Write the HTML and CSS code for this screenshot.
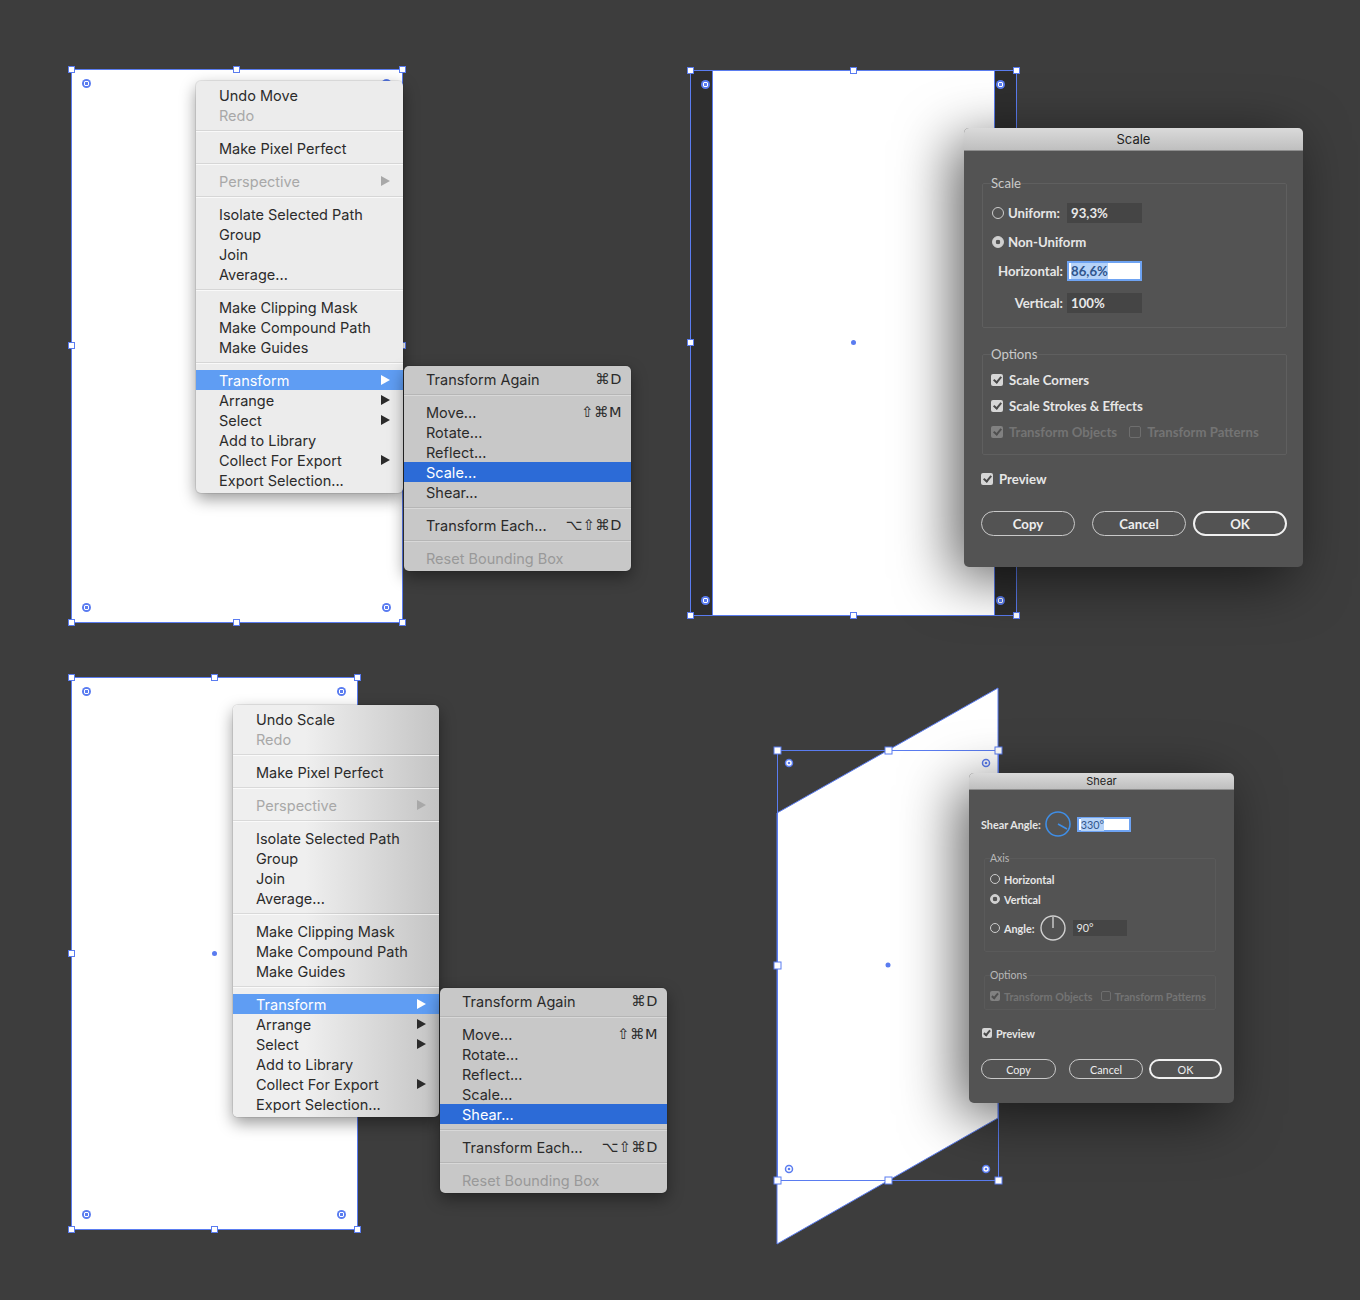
FILE: index.html
```html
<!DOCTYPE html>
<html lang="en">
<head>
  <meta charset="UTF-8">
  <title>Transform: Scale and Shear</title>
  <link rel="stylesheet" href="styles.css">
</head>
<body>
<div class="canvas">

  <!-- 1. context menu, Transform > Scale -->
  <div class="artboard board-one">
    <span class="handle h-tl"></span><span class="handle h-tm"></span><span class="handle h-tr"></span>
    <span class="handle h-ml"></span><span class="handle h-mr"></span>
    <span class="handle h-bl"></span><span class="handle h-bm"></span><span class="handle h-br"></span>
    <span class="widget w-tl"></span><span class="widget w-tr"></span>
    <span class="widget w-bl"></span><span class="widget w-br"></span>
  </div>

  <div class="menu menu-one">
    <div class="menu-item">Undo Move</div>
    <div class="menu-item is-disabled">Redo</div>
    <div class="menu-sep"></div>
    <div class="menu-item">Make Pixel Perfect</div>
    <div class="menu-sep"></div>
    <div class="menu-item is-disabled">Perspective<span class="arrow"></span></div>
    <div class="menu-sep"></div>
    <div class="menu-item">Isolate Selected Path</div>
    <div class="menu-item">Group</div>
    <div class="menu-item">Join</div>
    <div class="menu-item">Average...</div>
    <div class="menu-sep"></div>
    <div class="menu-item">Make Clipping Mask</div>
    <div class="menu-item">Make Compound Path</div>
    <div class="menu-item">Make Guides</div>
    <div class="menu-sep"></div>
    <div class="menu-item is-open">Transform<span class="arrow"></span></div>
    <div class="menu-item">Arrange<span class="arrow"></span></div>
    <div class="menu-item">Select<span class="arrow"></span></div>
    <div class="menu-item">Add to Library</div>
    <div class="menu-item">Collect For Export<span class="arrow"></span></div>
    <div class="menu-item">Export Selection...</div>
  </div>

  <div class="menu submenu sub-one">
    <div class="menu-item">Transform Again<span class="keys">⌘D</span></div>
    <div class="menu-sep"></div>
    <div class="menu-item">Move...<span class="keys">⇧⌘M</span></div>
    <div class="menu-item">Rotate...</div>
    <div class="menu-item">Reflect...</div>
    <div class="menu-item is-active">Scale...</div>
    <div class="menu-item">Shear...</div>
    <div class="menu-sep"></div>
    <div class="menu-item">Transform Each...<span class="keys">⌥⇧⌘D</span></div>
    <div class="menu-sep"></div>
    <div class="menu-item is-disabled">Reset Bounding Box</div>
  </div>

  <!-- 2. scale dialog -->
  <div class="selection board-two">
    <div class="scaled"></div>
    <span class="handle h-tl"></span><span class="handle h-tm"></span><span class="handle h-tr"></span>
    <span class="handle h-ml"></span><span class="handle h-mr"></span>
    <span class="handle h-bl"></span><span class="handle h-bm"></span><span class="handle h-br"></span>
    <span class="widget w-tl"></span><span class="widget w-tr"></span>
    <span class="widget w-bl"></span><span class="widget w-br"></span>
    <span class="center-dot"></span>
  </div>

  <div class="dialog scale-dialog">
    <div class="dialog-title">Scale</div>
    <div class="dialog-body">
      <fieldset class="group">
        <legend>Scale</legend>
        <div class="row first">
          <div class="cell"><span class="radio"></span><span class="strong">Uniform:</span></div>
          <div class="field">93,3%</div>
        </div>
        <div class="row">
          <div class="cell wide"><span class="radio is-on"></span><span class="strong">Non-Uniform</span></div>
        </div>
        <div class="row">
          <div class="cell right strong">Horizontal:</div>
          <div class="field is-focus"><span class="sel">86,6%</span></div>
        </div>
        <div class="row last">
          <div class="cell right strong">Vertical:</div>
          <div class="field">100%</div>
        </div>
      </fieldset>

      <fieldset class="group options">
        <legend>Options</legend>
        <div class="row first"><span class="check"></span><span class="strong">Scale Corners</span></div>
        <div class="row"><span class="check"></span><span class="strong">Scale Strokes &amp; Effects</span></div>
        <div class="row muted">
          <span class="check"></span><span class="strong">Transform Objects</span>
          <span class="check is-empty"></span><span class="strong">Transform Patterns</span>
        </div>
      </fieldset>

      <div class="row preview"><span class="check"></span><span class="strong">Preview</span></div>

      <div class="buttons">
        <button class="btn">Copy</button>
        <button class="btn cancel">Cancel</button>
        <button class="btn ok">OK</button>
      </div>
    </div>
  </div>

  <!-- 3. context menu, Transform > Shear -->
  <div class="artboard board-three">
    <span class="handle h-tl"></span><span class="handle h-tm"></span><span class="handle h-tr"></span>
    <span class="handle h-ml"></span><span class="handle h-mr"></span>
    <span class="handle h-bl"></span><span class="handle h-bm"></span><span class="handle h-br"></span>
    <span class="widget w-tl"></span><span class="widget w-tr"></span>
    <span class="widget w-bl"></span><span class="widget w-br"></span>
    <span class="center-dot"></span>
  </div>

  <div class="menu menu-two">
    <div class="menu-item">Undo Scale</div>
    <div class="menu-item is-disabled">Redo</div>
    <div class="menu-sep"></div>
    <div class="menu-item">Make Pixel Perfect</div>
    <div class="menu-sep"></div>
    <div class="menu-item is-disabled">Perspective<span class="arrow"></span></div>
    <div class="menu-sep"></div>
    <div class="menu-item">Isolate Selected Path</div>
    <div class="menu-item">Group</div>
    <div class="menu-item">Join</div>
    <div class="menu-item">Average...</div>
    <div class="menu-sep"></div>
    <div class="menu-item">Make Clipping Mask</div>
    <div class="menu-item">Make Compound Path</div>
    <div class="menu-item">Make Guides</div>
    <div class="menu-sep"></div>
    <div class="menu-item is-open">Transform<span class="arrow"></span></div>
    <div class="menu-item">Arrange<span class="arrow"></span></div>
    <div class="menu-item">Select<span class="arrow"></span></div>
    <div class="menu-item">Add to Library</div>
    <div class="menu-item">Collect For Export<span class="arrow"></span></div>
    <div class="menu-item">Export Selection...</div>
  </div>

  <div class="menu submenu sub-two">
    <div class="menu-item">Transform Again<span class="keys">⌘D</span></div>
    <div class="menu-sep"></div>
    <div class="menu-item">Move...<span class="keys">⇧⌘M</span></div>
    <div class="menu-item">Rotate...</div>
    <div class="menu-item">Reflect...</div>
    <div class="menu-item">Scale...</div>
    <div class="menu-item is-active">Shear...</div>
    <div class="menu-sep"></div>
    <div class="menu-item">Transform Each...<span class="keys">⌥⇧⌘D</span></div>
    <div class="menu-sep"></div>
    <div class="menu-item is-disabled">Reset Bounding Box</div>
  </div>

  <!-- 4. shear dialog -->
  <svg class="sheared" width="240" height="575" viewBox="0 0 240 575">
    <polygon points="7,133 228,8 228,438 7,564" fill="#fff" stroke="#5a7cf0" stroke-width="1"/>
    <rect x="7.5" y="70.5" width="221" height="430" fill="none" stroke="#5a7cf0" stroke-width="1"/>
    <g fill="#fff" stroke="#5a7cf0" stroke-width="1">
      <rect x="4" y="67" width="7" height="7"/><rect x="115" y="67" width="7" height="7"/><rect x="225" y="67" width="7" height="7"/>
      <rect x="4" y="282" width="7" height="7"/><rect x="225" y="282" width="7" height="7"/>
      <rect x="4" y="497" width="7" height="7"/><rect x="115" y="497" width="7" height="7"/><rect x="225" y="497" width="7" height="7"/>
    </g>
    <g fill="#fff" stroke="#5a7cf0" stroke-width="1.5">
      <circle cx="19" cy="83" r="3.5"/><circle cx="216" cy="83" r="3.5"/>
      <circle cx="19" cy="489" r="3.5"/><circle cx="216" cy="489" r="3.5"/>
    </g>
    <g fill="#5a7cf0">
      <circle cx="19" cy="83" r="1.3"/><circle cx="216" cy="83" r="1.3"/>
      <circle cx="19" cy="489" r="1.3"/><circle cx="216" cy="489" r="1.3"/>
      <circle cx="118" cy="285" r="2.5"/>
    </g>
  </svg>

  <div class="dialog small shear-dialog">
    <div class="dialog-title">Shear</div>
    <div class="dialog-body">
      <div class="row angle-row">
        <span class="strong">Shear Angle:</span>
        <svg class="dial" width="26" height="26" viewBox="0 0 26 26">
          <circle cx="13" cy="13" r="12" fill="none" stroke="#3f8ee6" stroke-width="1.6"/>
          <line x1="13" y1="13" x2="22" y2="18" stroke="#3f8ee6" stroke-width="1.6"/>
        </svg>
        <div class="field is-focus"><span class="sel">330°</span></div>
      </div>

      <fieldset class="group axis">
        <legend>Axis</legend>
        <div class="row first"><span class="radio"></span><span class="strong">Horizontal</span></div>
        <div class="row"><span class="radio is-on"></span><span class="strong">Vertical</span></div>
        <div class="row dial-row">
          <span class="radio"></span><span class="strong">Angle:</span>
          <svg class="dial" width="26" height="26" viewBox="0 0 26 26">
            <circle cx="13" cy="13" r="12" fill="none" stroke="#cfcfcf" stroke-width="1.4"/>
            <line x1="13" y1="13" x2="13" y2="2" stroke="#cfcfcf" stroke-width="1.4"/>
          </svg>
          <div class="field">90°</div>
        </div>
      </fieldset>

      <fieldset class="group options">
        <legend>Options</legend>
        <div class="row first muted">
          <span class="check"></span><span class="strong">Transform Objects</span>
          <span class="check is-empty"></span><span class="strong">Transform Patterns</span>
        </div>
      </fieldset>

      <div class="row preview"><span class="check"></span><span class="strong">Preview</span></div>

      <div class="buttons">
        <button class="btn">Copy</button>
        <button class="btn cancel">Cancel</button>
        <button class="btn ok">OK</button>
      </div>
    </div>
  </div>

</div>
</body>
</html>
```

FILE: styles.css
```css
body {
  margin: 0;
  background-color: #3d3d3d;
}
.canvas {
  position: relative;
  width: 1360px;
  height: 1300px;
  overflow: hidden;
}

/* artboards and selection */
.artboard, .selection {
  position: absolute;
  box-sizing: border-box;
  border: 1px solid #5a7cf0;
}
.artboard {
  background: #fff;
}
.board-one {
  left: 71px;
  top: 69px;
  width: 332px;
  height: 554px;
}
.board-three {
  left: 71px;
  top: 677px;
  width: 287px;
  height: 553px;
}
.selection {
  display: flex;
  padding: 0 21px;
  background: #2e2e2e;
}
.board-two {
  left: 690px;
  top: 70px;
  width: 327px;
  height: 546px;
}
.scaled {
  flex: 1;
  background: #fff;
  border-left: 1px solid #5a7cf0;
  border-right: 1px solid #5a7cf0;
}
.handle {
  position: absolute;
  width: 7px;
  height: 7px;
  box-sizing: border-box;
  background: #fff;
  border: 1px solid #5a7cf0;
}
.h-tl, .h-tm, .h-tr { top: -4px; }
.h-bl, .h-bm, .h-br { bottom: -4px; }
.h-ml, .h-mr { top: 50%; margin-top: -4px; }
.h-tl, .h-ml, .h-bl { left: -4px; }
.h-tr, .h-mr, .h-br { right: -4px; }
.h-tm, .h-bm { left: 50%; margin-left: -4px; }
.widget {
  position: absolute;
  width: 9px;
  height: 9px;
  border-radius: 50%;
  background: radial-gradient(circle, #5a7cf0 0 1.4px, #fff 1.9px 2.6px, #5a7cf0 3px 4.5px);
}
.w-tl { left: 10px; top: 9px; }
.w-tr { right: 11px; top: 9px; }
.w-bl { left: 10px; bottom: 10px; }
.w-br { right: 11px; bottom: 10px; }
.center-dot {
  position: absolute;
  left: 50%;
  top: 50%;
  width: 5px;
  height: 5px;
  margin: -3px 0 0 -3px;
  border-radius: 50%;
  background: #5a7cf0;
}
.sheared {
  position: absolute;
  left: 770px;
  top: 680px;
}

/* context menus */
.menu {
  position: absolute;
  box-sizing: border-box;
  width: 207px;
  padding: 4px 0 3px;
  background: #ececec;
  border-radius: 5px;
  box-shadow: 0 6px 16px rgba(0,0,0,0.4), 0 0 0 1px rgba(0,0,0,0.08);
  font-family: Inter, "Noto Sans", sans-serif;
  font-size: 14.5px;
  color: #2b2b2b;
}
.menu-one {
  left: 196px;
  top: 81px;
}
.menu-two {
  left: 233px;
  top: 705px;
  width: 206px;
  background: linear-gradient(to right, #efefef 35%, #c4c4c4 100%);
}
.submenu {
  width: 227px;
  padding: 3px 0;
  background: #c8c8c8;
}
.sub-one {
  left: 404px;
  top: 366px;
}
.sub-two {
  left: 440px;
  top: 988px;
}
.menu-item {
  display: flex;
  align-items: center;
  justify-content: space-between;
  height: 20px;
  padding: 0 13px 0 23px;
  white-space: nowrap;
}
.submenu .menu-item {
  padding: 0 9px 0 22px;
}
.menu-item.is-disabled {
  color: #a8a8a8;
}
.submenu .menu-item.is-disabled {
  color: #999;
}
.menu-item.is-open {
  background: #5f9df3;
  color: #fff;
}
.menu-item.is-active {
  background: #2c6bd7;
  color: #fff;
}
.arrow {
  width: 0;
  height: 0;
  border-left: 9px solid currentColor;
  border-top: 5px solid transparent;
  border-bottom: 5px solid transparent;
}
.keys {
  font-family: "DejaVu Sans", sans-serif;
  font-size: 14.5px;
  letter-spacing: 0.5px;
}
.menu-sep {
  height: 0;
  margin: 5px 0 6px;
  border-top: 1px solid rgba(0,0,0,0.09);
  border-bottom: 1px solid rgba(255,255,255,0.7);
}
.submenu .menu-sep {
  border-bottom-color: rgba(255,255,255,0.3);
}

/* dialogs */
.dialog {
  position: absolute;
  background: #535353;
  border-radius: 5px;
  overflow: hidden;
  box-shadow: -12px 12px 55px rgba(0,0,0,0.6);
  font-family: Lato, "Open Sans", sans-serif;
  font-size: 13.2px;
  color: #e6e6e6;
}
.scale-dialog {
  left: 964px;
  top: 128px;
  width: 339px;
}
.dialog-title {
  height: 22px;
  line-height: 22px;
  text-align: center;
  background: linear-gradient(#dadada, #bfbfbf);
  border-bottom: 1px solid #8e8e8e;
  font-family: Inter, "Noto Sans", sans-serif;
  font-size: 13px;
  color: #222;
}
.dialog-body {
  padding: 25px 16px 31px 18px;
}
.group {
  margin: 0;
  padding: 0 8px 13px;
  border: 1px solid #5f5f5f;
  border-radius: 2px;
}
.group legend {
  padding: 0;
  line-height: 14px;
  color: #cacaca;
}
.group.options {
  margin-top: 19px;
  padding-bottom: 12px;
}
.row {
  display: flex;
  align-items: center;
  height: 20px;
  margin-top: 6px;
}
.scale-dialog .group:first-child .row {
  height: 22px;
  margin-top: 7px;
}
.scale-dialog .group:first-child .row.first { margin-top: 12px; }
.scale-dialog .group:first-child .row.last { margin-top: 10px; }
.group.options .row.first { margin-top: 9px; }
.strong {
  font-weight: 700;
}
.cell {
  display: flex;
  align-items: center;
  width: 76px;
  flex: none;
  white-space: nowrap;
}
.cell.wide {
  width: auto;
}
.cell.right {
  justify-content: flex-end;
  box-sizing: border-box;
  padding-right: 4px;
}
.field {
  box-sizing: border-box;
  width: 75px;
  height: 20px;
  padding: 0 4px;
  line-height: 20px;
  background: #454545;
  font-weight: 700;
  color: #e8e8e8;
}
.field.is-focus {
  line-height: 16px;
  padding: 0 2px;
  background: #fff;
  border: 2px solid #6ea3f2;
}
.sel {
  background: #b6d3f8;
  color: #30558c;
}
.radio {
  box-sizing: border-box;
  width: 12px;
  height: 12px;
  margin: 0 4px 0 1px;
  border-radius: 50%;
  border: 1px solid #cdcdcd;
  flex: none;
}
.radio.is-on {
  background: radial-gradient(circle, #555 0 2px, #d0d0d0 2.6px);
  border-color: #d0d0d0;
}
.check {
  position: relative;
  box-sizing: border-box;
  width: 12px;
  height: 12px;
  margin-right: 6px;
  border-radius: 2px;
  background: #d6d6d6;
  flex: none;
}
.check::after {
  content: "";
  position: absolute;
  left: 4px;
  top: 1px;
  width: 3px;
  height: 6px;
  border: solid #4a4a4a;
  border-width: 0 2px 2px 0;
  transform: rotate(40deg);
}
.check.is-empty {
  margin-left: 12px;
  background: transparent;
  border: 1px solid #6e6e6e;
}
.check.is-empty::after {
  display: none;
}
.muted {
  color: #747474;
}
.muted .check {
  opacity: 0.35;
}
.muted .check.is-empty {
  opacity: 1;
}
.row.preview {
  margin: 14px 0 0 -1px;
}
.buttons {
  display: flex;
  margin: 22px 0 0 -1px;
}
.btn {
  box-sizing: border-box;
  width: 94px;
  height: 25px;
  padding: 0;
  border: 1px solid #c9c9c9;
  border-radius: 13px;
  background: transparent;
  font-family: Lato, "Open Sans", sans-serif;
  font-size: 13.2px;
  font-weight: 700;
  color: #eee;
}
.btn.cancel {
  margin-left: 17px;
}
.btn.ok {
  margin-left: 7px;
  border: 2px solid #f0f0f0;
}

/* smaller shear dialog */
.shear-dialog {
  left: 969px;
  top: 773px;
  width: 265px;
  font-size: 10.8px;
}
.small .dialog-title {
  height: 16px;
  line-height: 16px;
  font-size: 11px;
}
.small .dialog-body {
  padding: 21px 12px 24px 12px;
}
.small .row {
  height: 14px;
  margin-top: 6px;
}
.small .row.angle-row {
  height: 26px;
  margin-top: 0;
}
.angle-row .dial {
  margin: 0 6px 0 4px;
}
.small .field {
  width: 54px;
  height: 16px;
  line-height: 16px;
  font-weight: 400;
}
.small .field.is-focus {
  height: 15px;
  line-height: 11px;
  border-width: 2px;
}
.small .group {
  margin: 15px 0 0 3px;
  width: 232px;
  box-sizing: border-box;
  padding: 0 5px 10px;
  border-color: #5a5a5a;
}
.small .group legend {
  line-height: 12px;
  font-size: 10.5px;
  color: #b8b8b8;
}
.small .group .row.first {
  margin-top: 8px;
}
.small .row.dial-row {
  height: 26px;
  margin-top: 9px;
}
.dial-row .dial {
  margin: 0 7px 0 5px;
}
.small .group.options {
  margin-top: 17px;
  padding-bottom: 6px;
}
.small .radio {
  width: 10px;
  height: 10px;
  margin: 0 4px 0 0;
}
.small .check {
  width: 10px;
  height: 10px;
  margin-right: 4px;
}
.small .check::after {
  left: 3px;
  top: 1px;
  width: 2px;
  height: 5px;
}
.small .check.is-empty {
  margin-left: 8px;
}
.small .row.preview {
  margin: 16px 0 0 1px;
}
.small .buttons {
  margin: 19px 0 0 0;
}
.small .btn {
  width: 75px;
  height: 20px;
  border-radius: 10px;
  font-size: 10.8px;
  font-weight: 400;
}
.small .btn.cancel {
  width: 74px;
  margin-left: 13px;
}
.small .btn.ok {
  width: 73px;
  margin-left: 6px;
}
```
